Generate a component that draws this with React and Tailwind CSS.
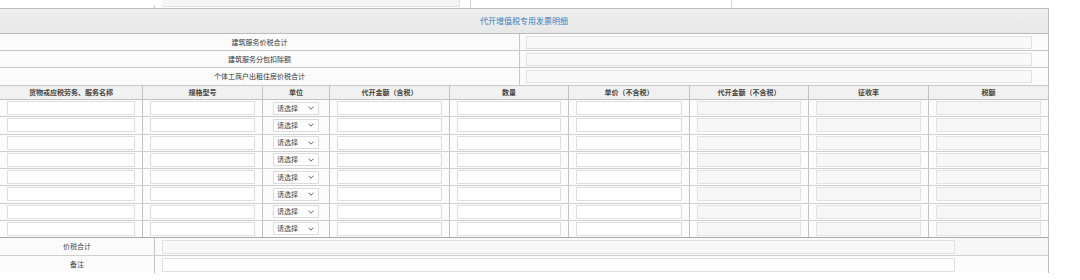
import React from "react";

const cols = [
  { w: "w-[143px]", label: "货物或应税劳务、服务名称", kind: "input" },
  { w: "w-[120px]", label: "规格型号", kind: "input" },
  { w: "w-[67px]", label: "单位", kind: "select" },
  { w: "w-[120px]", label: "代开金额（含税）", kind: "input" },
  { w: "w-[119px]", label: "数量", kind: "input" },
  { w: "w-[121px]", label: "单价（不含税）", kind: "input" },
  { w: "w-[119px]", label: "代开金额（不含税）", kind: "disabled" },
  { w: "w-[120px]", label: "征收率", kind: "disabled" },
  { w: "w-[120px]", label: "税额", kind: "disabled" },
];

const font = { fontFamily: '"Noto Sans CJK SC", "Noto Sans", sans-serif' };

function Chevron() {
  return (
    <svg width="6" height="4" viewBox="0 0 6 4" className="shrink-0">
      <path d="M0.5 0.7 L3 3.2 L5.5 0.7" fill="none" stroke="#555" strokeWidth="0.9" />
    </svg>
  );
}

function Cell({ col }) {
  return (
    <div className={`${col.w} shrink-0 h-full border-r border-[#c2c2c2] flex items-center justify-center px-[7px]`}>
      {col.kind === "select" ? (
        <div className="w-[46px] h-[13px] border border-[#dcdcdc] bg-white flex items-center justify-between pl-[3px] pr-[4px]">
          <span className="text-[7px] leading-none text-[#444]">请选择</span>
          <Chevron />
        </div>
      ) : col.kind === "disabled" ? (
        <div className="w-full h-[14px] border border-[#e2e2e2] bg-[#f7f7f7]" />
      ) : (
        <div className="w-full h-[14px] border border-[#dedede] bg-white" />
      )}
    </div>
  );
}

export default function App() {
  const topRows = ["建筑服务价税合计", "建筑服务分包扣除额", "个体工商户出租住房价税合计"];
  return (
    <div className="w-[1080px] h-[280px] bg-white overflow-hidden text-[#333]" style={font}>
      {/* strip above */}
      <div className="h-[8px] flex items-end">
        <div className="w-[155px] h-[3px] border-r border-[#cfcfcf]" />
        <div className="ml-[7px] w-[298px] h-[7px] bg-[#f5f5f5] border-b border-r border-[#e3e3e3] self-start" />
        <div className="w-[10px]" />
        <div className="w-[262px] h-[8px] border-l border-r border-[#d6d6d6]" />
      </div>

      <div className="w-[1049px] border-t border-r border-[#bdbdbd]">
        {/* title */}
        <div className="h-[25px] bg-gradient-to-b from-[#efefef] to-[#e8e8e8] border-b border-[#bcbcbc] flex items-center justify-center">
          <span className="text-[8px] text-[#3a7cc2]">代开增值税专用发票明细</span>
        </div>

        {topRows.map((t, i) => (
          <div
            key={t}
            className={`${i === 2 ? "h-[18px]" : "h-[17px]"} flex border-b border-[#c8c8c8] bg-[#fbfbfb]`}
          >
            <div className="w-[520px] shrink-0 border-r border-[#c8c8c8] flex items-center justify-center">
              <span className="text-[7px] text-[#333]">{t}</span>
            </div>
            <div className="flex-1 flex items-center pl-[6px] pr-[16px]">
              <div className="w-full h-[13px] border border-[#e1e1e1] bg-[#f9f9f9]" />
            </div>
          </div>
        ))}

        {/* header */}
        <div className="h-[14px] flex border-b border-[#c2c2c2] bg-[#f1f1f1]">
          {cols.map((c) => (
            <div
              key={c.label}
              className={`${c.w} shrink-0 h-full border-r border-[#c2c2c2] flex items-center justify-center`}
            >
              <span className="text-[7px] font-bold text-[#444] leading-none">{c.label}</span>
            </div>
          ))}
        </div>

        {/* data rows */}
        {Array.from({ length: 8 }).map((_, r) => (
          <div
            key={r}
            className={`h-[17.25px] flex bg-[#fcfcfc] ${r === 7 ? "border-b border-[#a9a9a9]" : "border-b border-[#cfcfcf]"}`}
          >
            {cols.map((c) => (
              <Cell key={c.label} col={c} />
            ))}
          </div>
        ))}

        {/* totals */}
        <div className="h-[18px] flex border-b border-[#cfcfcf] bg-[#fbfbfb]">
          <div className="w-[155px] shrink-0 border-r border-[#c2c2c2] flex items-center justify-center">
            <span className="text-[7px] text-[#444]">价税合计</span>
          </div>
          <div className="w-[800px] shrink-0 flex items-center pl-[7px]">
            <div className="w-full h-[14px] border border-[#e1e1e1] bg-[#f8f8f8]" />
          </div>
          <div className="flex-1 bg-[#f7f7f7]" />
        </div>
        <div className="h-[17px] flex bg-[#fcfcfc]">
          <div className="w-[155px] shrink-0 border-r border-[#c2c2c2] flex items-center justify-center">
            <span className="text-[7px] text-[#444]">备注</span>
          </div>
          <div className="w-[800px] shrink-0 flex items-center pl-[7px]">
            <div className="w-full h-[14px] border border-[#e1e1e1] bg-white" />
          </div>
          <div className="flex-1" />
        </div>
      </div>
    </div>
  );
}
